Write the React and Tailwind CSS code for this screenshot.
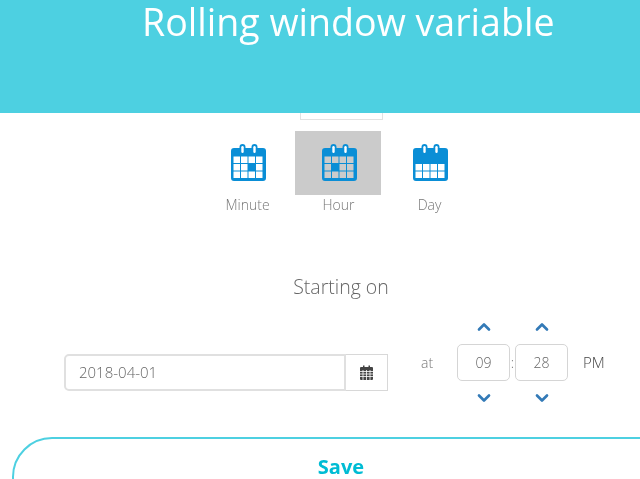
import React from 'react';
import { ChevronUp, ChevronDown } from 'lucide-react';

const font = { fontFamily: '"Open Sans", sans-serif' };

// 4x3 grid calendar, highlighted cell or filled top row
const CalendarIcon = ({ filled, cell }) => {
  const cols = [2.5, 10, 17.5, 25];
  const rows = filled ? [20, 27.5] : [12.5, 20, 27.5];
  return (
    <svg width="35" height="37" viewBox="0 0 35 37">
      <path fill="#0a8ed6" d="M3 4h5.500V3a3 3 0 0 1 6 0v1h6V3a3 3 0 0 1 6 0v1H32a3 3 0 0 1 3 3v27a3 3 0 0 1-3 3H3a3 3 0 0 1-3-3V7a3 3 0 0 1 3-3z" />
      <rect x="10.300" y="2" width="2.400" height="7" rx="1.200" fill="#fff" />
      <rect x="22.300" y="2" width="2.400" height="7" rx="1.200" fill="#fff" />
      {rows.map((y, r) =>
        cols.map((x, c) =>
          cell && cell[0] === r && cell[1] === c ? null : (
            <rect key={`${r}-${c}`} x={x} y={y} width="6.500" height="6.500" fill="currentColor" />
          )
        )
      )}
    </svg>
  );
};

const Tile = ({ label, active, filled, cell }) => (
  <div className="w-[86px] flex flex-col items-center">
    <div className={`w-[86px] h-[64px] flex items-center justify-center pl-[2px] pb-[2px] ${active ? 'bg-[#cbcbcb] text-[#cbcbcb]' : 'text-white'}`}>
      <CalendarIcon filled={filled} cell={cell} />
    </div>
    <span className="text-[14px] leading-[18px] mt-[1px] ml-[1px] text-[#777] font-light">{label}</span>
  </div>
);

const Spinner = ({ value }) => (
  <div className="flex flex-col items-center w-[53px]">
    <ChevronUp size={20} strokeWidth={3.2} className="text-[#337ab7]" />
    <div className="w-[53px] h-[37px] mt-[7px] border border-[#d5d5d5] rounded-[5px] flex items-center justify-center text-sm text-[#666] font-light">
      {value}
    </div>
    <ChevronDown size={20} strokeWidth={3.2} className="text-[#337ab7] mt-[7px]" />
  </div>
);

export default function App() {
  return (
    <div className="w-[640px] h-[479px] overflow-hidden bg-white will-change-transform" style={font}>
      <header className="h-[113px] bg-[#4dd0e1] pl-[142px]">
        <h1 className="text-white text-[37.6px] leading-[44px] font-normal whitespace-nowrap">Rolling window variable</h1>
      </header>

      <div className="ml-[300px] w-[83px] h-[7px] border border-t-0 border-[#e2e2e2]" />

      <div className="flex gap-[5px] mt-[11px] ml-[204px]">
        <Tile label="Minute" cell={[1, 2]} />
        <Tile label="Hour" active cell={[1, 1]} />
        <Tile label="Day" filled />
      </div>

      <p className="text-center pl-[42px] mt-[60px] text-[19.500px] leading-[26px] font-light text-[#666]">Starting on</p>

      <div className="flex items-center ml-[64px] mt-[17px]">
        <div className="flex w-[324px] h-[37px] mt-[20px]">
          <div className="w-[282px] h-[37px] border-2 border-[#e0e0e0] rounded-l-[5px] pl-[13px] flex items-center text-[15px] text-[#666] font-light">
            2018-04-01
          </div>
          <div className="w-[42px] h-[37px] border border-l-0 border-[#d8d8d8] flex items-center justify-center">
            <svg width="15" height="15" viewBox="0 0 15 15">
              <path fill="#444" d="M2 2h2V.5h1.500V2h4V.5H11V2h2a1 1 0 0 1 1 1v11a1 1 0 0 1-1 1H2a1 1 0 0 1-1-1V3a1 1 0 0 1 1-1z" />
              <path stroke="#fff" strokeWidth="0.8" d="M1 6.500h13M1 9h13M1 11.500h13M4 5v10M7.500 5v10M11 5v10" />
            </svg>
          </div>
        </div>

        <span className="ml-[33px] w-[36px] text-sm text-[#777] font-light">at</span>

        <Spinner value="09" />
        <span className="w-[5px] text-center text-sm text-[#777] font-light">:</span>
        <Spinner value="28" />

        <span className="ml-[15px] -mt-[1px] text-[15px] text-[#444] font-light">PM</span>
      </div>

      <div className="ml-[12px] mt-[29px] w-[700px] h-[80px] border-2 border-[#4dd0e1] rounded-[40px] pt-[16px] pr-[42px] text-center text-[20px] leading-[24px] font-bold text-[#00bcd4]">
        Save
      </div>
    </div>
  );
}
